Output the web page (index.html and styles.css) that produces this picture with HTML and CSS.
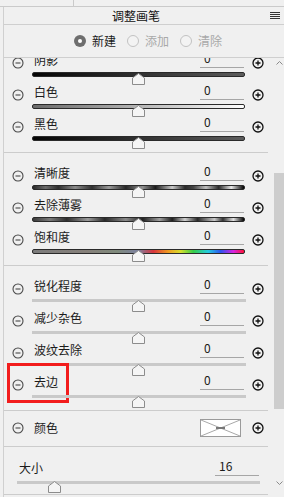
FILE: index.html
```html
<!DOCTYPE html>
<html lang="zh">
<head>
<meta charset="utf-8">
<title>调整画笔</title>
<link rel="stylesheet" href="styles.css">
</head>
<body>
<div class="top"><div class="top-tab"></div></div>
<div class="panel">
  <div class="head">
    <div class="title">调整画笔</div>
    <svg class="menu" width="10" height="7" viewBox="0 0 10 7"><path d="M0 .5H10M0 2.5H10M0 4.5H10M0 6.5H10" stroke="#333" stroke-width="1"/></svg>
  </div>
  <div class="radios">
    <div class="radio on"><span class="dot"></span><span>新建</span></div>
    <div class="radio off"><span class="dot"></span><span>添加</span></div>
    <div class="radio off"><span class="dot"></span><span>清除</span></div>
  </div>
  <div class="main">
    <div class="viewport">
      <div class="content">
        <section class="sec">
          <div class="row">
            <svg class="ic minus" viewBox="0 0 12 12"><circle cx="6" cy="6" r="5"/><path d="M3.5 6H8.5"/></svg>
            <div class="mid">
              <div class="line"><span class="lbl">阴影</span><span class="val">0</span></div>
              <div class="track"><div class="bar g-dark"></div><svg class="thumb" viewBox="0 0 13 12"><path d="M.5 11.5V5L6.5.5 12.5 5V11.5Z"/></svg></div>
            </div>
            <svg class="ic plus" viewBox="0 0 12 12"><circle cx="6" cy="6" r="5"/><path d="M3.5 6H8.5M6 3.5V8.5"/></svg>
          </div>
          <div class="row">
            <svg class="ic minus" viewBox="0 0 12 12"><circle cx="6" cy="6" r="5"/><path d="M3.5 6H8.5"/></svg>
            <div class="mid">
              <div class="line"><span class="lbl">白色</span><span class="val">0</span></div>
              <div class="track"><div class="bar g-white"></div><svg class="thumb" viewBox="0 0 13 12"><path d="M.5 11.5V5L6.5.5 12.5 5V11.5Z"/></svg></div>
            </div>
            <svg class="ic plus" viewBox="0 0 12 12"><circle cx="6" cy="6" r="5"/><path d="M3.5 6H8.5M6 3.5V8.5"/></svg>
          </div>
          <div class="row">
            <svg class="ic minus" viewBox="0 0 12 12"><circle cx="6" cy="6" r="5"/><path d="M3.5 6H8.5"/></svg>
            <div class="mid">
              <div class="line"><span class="lbl">黑色</span><span class="val">0</span></div>
              <div class="track"><div class="bar g-dark"></div><svg class="thumb" viewBox="0 0 13 12"><path d="M.5 11.5V5L6.5.5 12.5 5V11.5Z"/></svg></div>
            </div>
            <svg class="ic plus" viewBox="0 0 12 12"><circle cx="6" cy="6" r="5"/><path d="M3.5 6H8.5M6 3.5V8.5"/></svg>
          </div>
        </section>
        <section class="sec">
          <div class="row">
            <svg class="ic minus" viewBox="0 0 12 12"><circle cx="6" cy="6" r="5"/><path d="M3.5 6H8.5"/></svg>
            <div class="mid">
              <div class="line"><span class="lbl">清晰度</span><span class="val">0</span></div>
              <div class="track"><div class="bar g-clarity"></div><svg class="thumb" viewBox="0 0 13 12"><path d="M.5 11.5V5L6.5.5 12.5 5V11.5Z"/></svg></div>
            </div>
            <svg class="ic plus" viewBox="0 0 12 12"><circle cx="6" cy="6" r="5"/><path d="M3.5 6H8.5M6 3.5V8.5"/></svg>
          </div>
          <div class="row">
            <svg class="ic minus" viewBox="0 0 12 12"><circle cx="6" cy="6" r="5"/><path d="M3.5 6H8.5"/></svg>
            <div class="mid">
              <div class="line"><span class="lbl">去除薄雾</span><span class="val">0</span></div>
              <div class="track"><div class="bar g-dehaze"></div><svg class="thumb" viewBox="0 0 13 12"><path d="M.5 11.5V5L6.5.5 12.5 5V11.5Z"/></svg></div>
            </div>
            <svg class="ic plus" viewBox="0 0 12 12"><circle cx="6" cy="6" r="5"/><path d="M3.5 6H8.5M6 3.5V8.5"/></svg>
          </div>
          <div class="row">
            <svg class="ic minus" viewBox="0 0 12 12"><circle cx="6" cy="6" r="5"/><path d="M3.5 6H8.5"/></svg>
            <div class="mid">
              <div class="line"><span class="lbl">饱和度</span><span class="val">0</span></div>
              <div class="track"><div class="bar g-sat"></div><svg class="thumb" viewBox="0 0 13 12"><path d="M.5 11.5V5L6.5.5 12.5 5V11.5Z"/></svg></div>
            </div>
            <svg class="ic plus" viewBox="0 0 12 12"><circle cx="6" cy="6" r="5"/><path d="M3.5 6H8.5M6 3.5V8.5"/></svg>
          </div>
        </section>
        <section class="sec">
          <div class="row">
            <svg class="ic minus" viewBox="0 0 12 12"><circle cx="6" cy="6" r="5"/><path d="M3.5 6H8.5"/></svg>
            <div class="mid">
              <div class="line"><span class="lbl">锐化程度</span><span class="val">0</span></div>
              <div class="track"><div class="bar plain"></div><svg class="thumb" viewBox="0 0 13 12"><path d="M.5 11.5V5L6.5.5 12.5 5V11.5Z"/></svg></div>
            </div>
            <svg class="ic plus" viewBox="0 0 12 12"><circle cx="6" cy="6" r="5"/><path d="M3.5 6H8.5M6 3.5V8.5"/></svg>
          </div>
          <div class="row">
            <svg class="ic minus" viewBox="0 0 12 12"><circle cx="6" cy="6" r="5"/><path d="M3.5 6H8.5"/></svg>
            <div class="mid">
              <div class="line"><span class="lbl">减少杂色</span><span class="val">0</span></div>
              <div class="track"><div class="bar plain"></div><svg class="thumb" viewBox="0 0 13 12"><path d="M.5 11.5V5L6.5.5 12.5 5V11.5Z"/></svg></div>
            </div>
            <svg class="ic plus" viewBox="0 0 12 12"><circle cx="6" cy="6" r="5"/><path d="M3.5 6H8.5M6 3.5V8.5"/></svg>
          </div>
          <div class="row">
            <svg class="ic minus" viewBox="0 0 12 12"><circle cx="6" cy="6" r="5"/><path d="M3.5 6H8.5"/></svg>
            <div class="mid">
              <div class="line"><span class="lbl">波纹去除</span><span class="val">0</span></div>
              <div class="track"><div class="bar plain"></div><svg class="thumb" viewBox="0 0 13 12"><path d="M.5 11.5V5L6.5.5 12.5 5V11.5Z"/></svg></div>
            </div>
            <svg class="ic plus" viewBox="0 0 12 12"><circle cx="6" cy="6" r="5"/><path d="M3.5 6H8.5M6 3.5V8.5"/></svg>
          </div>
          <div class="row">
            <div class="highlight"></div>
            <svg class="ic minus" viewBox="0 0 12 12"><circle cx="6" cy="6" r="5"/><path d="M3.5 6H8.5"/></svg>
            <div class="mid">
              <div class="line"><span class="lbl">去边</span><span class="val">0</span></div>
              <div class="track"><div class="bar plain"></div><svg class="thumb" viewBox="0 0 13 12"><path d="M.5 11.5V5L6.5.5 12.5 5V11.5Z"/></svg></div>
            </div>
            <svg class="ic plus" viewBox="0 0 12 12"><circle cx="6" cy="6" r="5"/><path d="M3.5 6H8.5M6 3.5V8.5"/></svg>
          </div>
        </section>
        <section class="sec sec-color">
          <div class="row row-color">
            <svg class="ic minus" viewBox="0 0 12 12"><circle cx="6" cy="6" r="5"/><path d="M3.5 6H8.5"/></svg>
            <div class="mid mid-color">
              <span class="lbl">颜色</span>
              <svg class="swatch" viewBox="0 0 41 18"><rect x=".5" y=".5" width="40" height="17" fill="#fff" stroke="#9a9a9a"/><path d="M1 1L40 17M40 1L1 17" stroke="#a8a8a8" stroke-width="1" fill="none"/><path d="M16 9H25" stroke="#777" stroke-width="2"/></svg>
            </div>
            <svg class="ic plus" viewBox="0 0 12 12"><circle cx="6" cy="6" r="5"/><path d="M3.5 6H8.5M6 3.5V8.5"/></svg>
          </div>
        </section>
        <section class="sec sec-size">
          <div class="size-line"><span class="lbl">大小</span><span class="val val-size">16</span></div>
          <div class="track size-track"><div class="bar plain"></div><svg class="thumb thumb-size" viewBox="0 0 13 12"><path d="M.5 11.5V5L6.5.5 12.5 5V11.5Z"/></svg></div>
        </section>
      </div>
    </div>
    <div class="scrollbar">
      <div class="arrow"><svg width="7" height="4" viewBox="0 0 7 4"><path d="M.5 3.5L3.5.5 6.5 3.5" fill="none" stroke="#8a8a8a"/></svg></div>
      <div class="sb-track"><div class="sb-thumb"></div></div>
      <div class="arrow"><svg width="7" height="4" viewBox="0 0 7 4"><path d="M.5.5L3.5 3.5 6.5.5" fill="none" stroke="#8a8a8a"/></svg></div>
    </div>
  </div>
</div>
</body>
</html>
```

FILE: styles.css
```css
* { box-sizing: border-box; }
html, body { margin: 0; padding: 0; }
body {
  width: 284px;
  height: 497px;
  overflow: hidden;
  background: #f0f0f0;
  font-family: "Noto Sans CJK SC", "Noto Sans", sans-serif;
  font-size: 12px;
  color: #1b1b1b;
}
.top {
  height: 7px;
  border-bottom: 1px solid #cacaca;
}
.top-tab {
  width: 74px;
  height: 6px;
  border-right: 1px solid #cacaca;
}
.panel {
  margin-left: 3px;
  border-left: 1px solid #d0d0d0;
  height: 490px;
}
.head {
  height: 18px;
  border-bottom: 1px solid #cfcfcf;
  display: flex;
  align-items: center;
}
.title {
  width: 264px;
  text-align: center;
  line-height: 17px;
  color: #111;
}
.menu {
  margin-left: 2px;
  display: block;
}
.radios {
  height: 33px;
  border-bottom: 1px solid #cfcfcf;
  display: flex;
  justify-content: center;
  align-items: center;
  gap: 11px;
  padding-left: 8px;
}
.radio {
  display: flex;
  align-items: center;
  gap: 6px;
  line-height: 16px;
}
.radio .dot {
  width: 12px;
  height: 12px;
  border-radius: 50%;
  display: flex;
  align-items: center;
  justify-content: center;
}
.radio.on .dot { background: #6e6e6e; }
.radio.on .dot::after {
  content: "";
  width: 4px;
  height: 4px;
  border-radius: 50%;
  background: #fff;
}
.radio.off { color: #a9a9a9; }
.radio.off .dot { border: 1px solid #c2c2c2; background: #f3f3f3; }

.main {
  display: flex;
  height: 439px;
}
.viewport {
  width: 264px;
  height: 439px;
  overflow: hidden;
}
.content { margin-top: -18px; }
.sec {
  padding: 8px 0 8px;
  border-bottom: 1px solid #cccccc;
}
.row {
  display: flex;
  height: 32px;
  position: relative;
}
.ic {
  width: 12px;
  height: 12px;
  flex: none;
  fill: none;
}
.ic.minus {
  margin: 9px 8px 0 8px;
  stroke: #4a4a4a;
  stroke-width: 1.1;
}
.ic.plus {
  margin: 9px 0 0 6px;
  stroke: #111;
  stroke-width: 1.3;
}
.mid {
  width: 214px;
  flex: none;
}
.line {
  height: 20px;
  display: flex;
  justify-content: space-between;
  align-items: flex-start;
}
.lbl {
  padding: 4px 0 0 2px;
  line-height: 16px;
}
.val {
  width: 44px;
  height: 20px;
  margin-right: 2px;
  padding: 2px 0 0 4px;
  line-height: 16px;
  border-bottom: 1px solid #a6a6a6;
}
.track {
  position: relative;
  height: 12px;
}
.bar {
  margin-top: 4px;
  height: 5px;
  width: 213px;
  border: 1px solid #2a2a2a;
  border-radius: 2px;
}
.bar.plain {
  margin-top: 5px;
  height: 3px;
  width: 214px;
  border: none;
  border-radius: 0;
  background: #c9c9c9;
}
.g-dark { background: linear-gradient(to right, #050505, #5c5c5c); }
.g-white { background: linear-gradient(to right, #6a6a6a, #ffffff); }
.g-clarity {
  background: linear-gradient(to right, #2a2a2a 0%, #6a6a6a 6%, #2e2e2e 12%, #8a8a8a 20%, #303030 28%, #9a9a9a 36%, #262626 44%, #8e8e8e 52%, #1a1a1a 58%, #c8c8c8 66%, #2a2a2a 72%, #444 76%, #bcbcbc 82%, #2a2a2a 88%, #e8e8e8 94%, #000 100%);
}
.g-dehaze {
  background: linear-gradient(to right, #3a3a3a 0%, #7a7a7a 8%, #2e2e2e 16%, #9a9a9a 26%, #2a2a2a 34%, #8a8a8a 44%, #222 52%, #a0a0a0 60%, #1e1e1e 66%, #d0d0d0 72%, #2a2a2a 78%, #c8c8c8 86%, #333 90%, #e0e0e0 95%, #000 100%);
}
.g-sat {
  background: linear-gradient(to right, #7c7c7c 0%, #86807a 25%, #7f8a7c 40%, #7c80a0 50%, #d8343c 57%, #f09a22 64%, #d6e02e 70%, #36cc48 76%, #24cce0 83%, #2e52f0 89%, #d824e0 95%, #ff1236 100%);
}
.thumb {
  position: absolute;
  left: 100px;
  top: 1px;
  width: 13px;
  height: 12px;
  fill: #f5f5f5;
  stroke: #8c8c8c;
  stroke-width: 1;
}
.highlight {
  position: absolute;
  left: 3px;
  top: -7px;
  width: 62px;
  height: 40px;
  border: 3px solid #f21c1c;
  pointer-events: none;
}
.sec-color { padding: 7px 0 9px; }
.row-color { height: 19px; }
.row-color .ic.minus { margin-top: 4px; }
.row-color .ic.plus { margin-top: 4px; }
.mid-color {
  display: flex;
  align-items: center;
  justify-content: space-between;
}
.mid-color .lbl { padding-top: 0; line-height: 19px; }
.swatch {
  width: 41px;
  height: 18px;
  margin-right: 5px;
  display: block;
}
.sec-size { padding: 12px 0 1px; }
.size-line {
  display: flex;
  justify-content: space-between;
  height: 18px;
  padding-left: 13px;
}
.size-line .lbl { padding-top: 0; line-height: 18px; }
.val-size {
  height: 17px;
  padding-top: 0;
  line-height: 14px;
  margin-right: 9px;
}
.size-track {
  margin-left: 13px;
  height: 12px;
}
.size-track .bar.plain { width: 243px; margin-top: 4px; }
.thumb-size { left: 31px; top: 0; }

.scrollbar {
  width: 12px;
  margin-left: 4px;
  display: flex;
  flex-direction: column;
}
.arrow {
  height: 10px;
  display: flex;
  align-items: center;
  justify-content: center;
}
.arrow svg { display: block; margin-left: 2px; }
.sb-track { height: 410px; }
.sb-thumb {
  margin: 105px 0 0 2px;
  width: 10px;
  height: 236px;
  background: #cdcdcd;
}
```
